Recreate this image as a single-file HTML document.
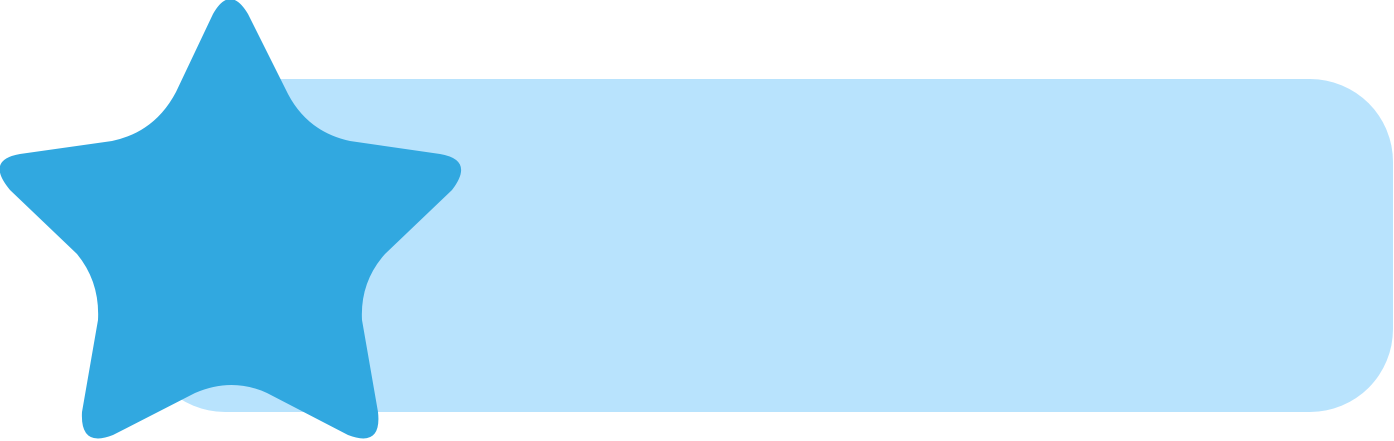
<!DOCTYPE html>
<html><head><meta charset="utf-8"><style>
html,body{margin:0;padding:0;background:#fff;width:1394px;height:441px;overflow:hidden}
</style></head><body>
<svg width="1394" height="441" viewBox="0 0 1394 441" xmlns="http://www.w3.org/2000/svg">
<rect x="142" y="79" width="1251" height="333" rx="83" ry="83" fill="#B8E3FD"/>
<rect x="140" y="78" width="38" height="54" fill="#fff"/>
<path fill="#31A8E0" d="M213,14 Q230,-16 248,14 L288,94 Q308,132 350,141 L440,154 Q475,160 452,190 L385,254 Q360,282 362,320 L378,412 Q382,448 348,435 L267,393 Q232,377 195,393 L113,435 Q80,448 82,412 L98,320 Q100,282 77,254 L10,190 Q-15,160 20,154 L112,141 Q155,132 176,92 Z"/>
</svg>
</body></html>
